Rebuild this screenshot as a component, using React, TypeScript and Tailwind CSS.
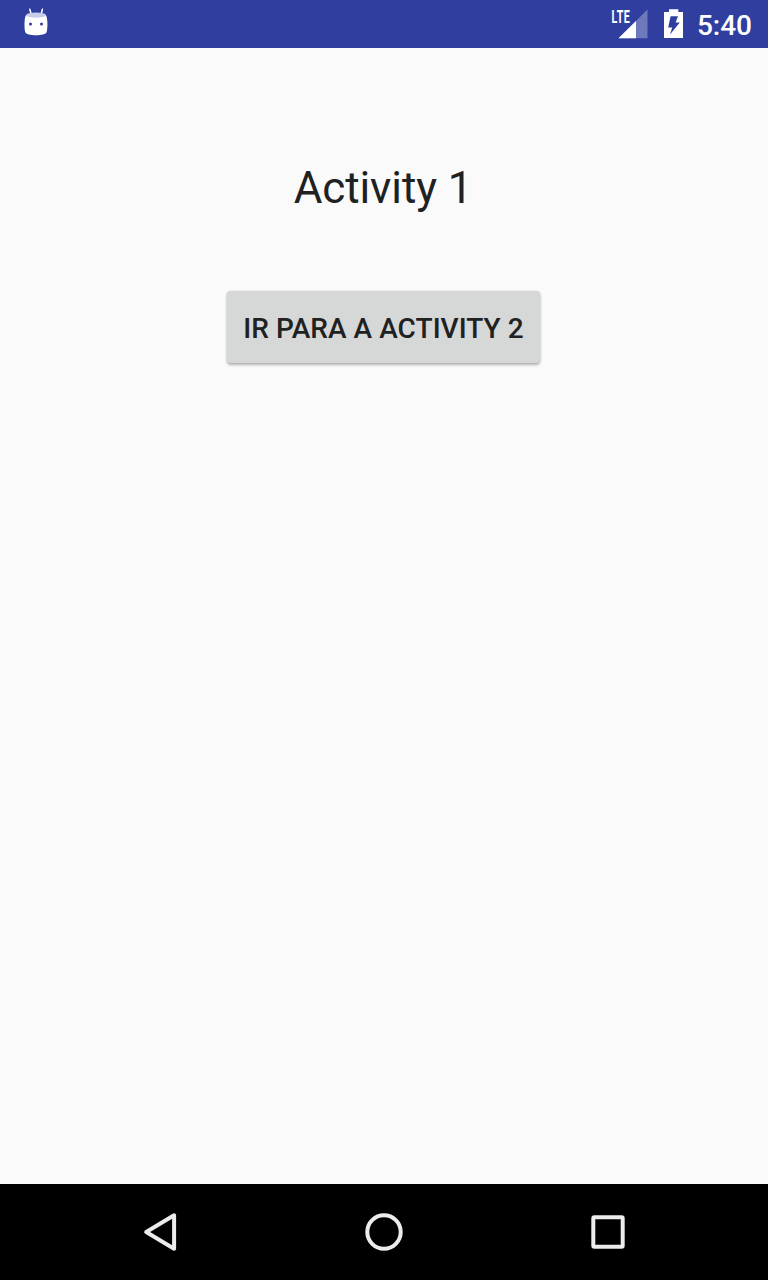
function RobotIcon() {
  return (
    <svg className="h-12 w-12" viewBox="12 0 48 48" fill="none">
      <path d="M29.8 9.3L31 13.5M42.4 9.3L41.3 13.5" stroke="#fff" strokeWidth="1.5" strokeLinecap="round" />
      <path d="M26 15C24 18 24.3 29 25.2 32C26.2 36.4 45.6 36.4 46.7 32C47.7 29 48 18 45.8 15Z" fill="#fff" />
      <ellipse cx="36" cy="15.2" rx="9.9" ry="2.6" fill="#c9cde9" />
      <circle cx="30.5" cy="24" r="1.5" fill="#303f9f" />
      <circle cx="41.5" cy="24" r="1.5" fill="#303f9f" />
    </svg>
  );
}

function SignalIcon() {
  return (
    <svg className="h-12 w-10" viewBox="610 0 40 48">
      <path d="M647.5 9.5V38.2H618.5Z" fill="#fff" fillOpacity="0.3" />
      <path d="M636 21V38.2H618.5Z" fill="#fff" />
      <text x="611.6" y="22.7" textLength="18.6" lengthAdjust="spacingAndGlyphs" fill="#fff" fontSize="17.5" fontWeight="700" letterSpacing="0.8" className="font-[Roboto,sans-serif]">LTE</text>
    </svg>
  );
}

function BatteryIcon() {
  return (
    <svg className="ml-3 h-12 w-6" viewBox="662 0 24 48">
      <path d="M669 9.2H678.3V12H683V38.1H664V12H669Z" fill="#fff" />
      <path d="M670.6 16.2H678L675.6 22.4H679.8L670 34.6L672.2 27.4H668.2Z" fill="#303f9f" />
    </svg>
  );
}

export default function App() {
  return (
    <div className="flex h-[1280px] w-[768px] flex-col overflow-hidden bg-[#fafafa] font-[Roboto,sans-serif] text-[#202121]">
      <header className="flex h-12 shrink-0 items-center bg-[#303f9f] pl-3 pr-4">
        <RobotIcon />
        <div className="ml-auto flex items-center">
          <SignalIcon />
          <BatteryIcon />
          <span className="ml-[11px] mt-[3px] text-[28px] font-medium leading-8 text-white">5:40</span>
        </div>
      </header>
      <main className="flex flex-1 flex-col items-center pt-[114px]">
        <h1 className="-ml-0.5 text-[44px] leading-[52px] tracking-[-0.1px]">Activity 1</h1>
        <button className="mr-px mt-[76.5px] flex h-[72.5px] w-[313px] items-center justify-center whitespace-nowrap rounded-[4px] bg-[#d6d7d7] pt-1 text-[28px] font-medium tracking-[0.04px] shadow-[0_2px_3px_rgba(0,0,0,0.28),0_0_2px_rgba(0,0,0,0.14)]">
          IR PARA A ACTIVITY 2
        </button>
      </main>
      <nav className="flex h-24 shrink-0 items-center justify-between bg-black px-[136px] text-[#ececec]">
        <svg className="size-12" viewBox="136 1208 48 48" fill="none" stroke="currentColor" strokeWidth="4" strokeLinejoin="round">
          <path d="M146.2 1232L174.1 1215.3V1248.7Z" />
        </svg>
        <svg className="size-12" viewBox="360 1208 48 48" fill="none" stroke="currentColor" strokeWidth="4">
          <circle cx="384" cy="1232" r="16.7" />
        </svg>
        <svg className="size-12" viewBox="584 1208 48 48" fill="none" stroke="currentColor" strokeWidth="4">
          <rect x="593.3" y="1217.3" width="29.4" height="29.4" rx="1" />
        </svg>
      </nav>
    </div>
  );
}
